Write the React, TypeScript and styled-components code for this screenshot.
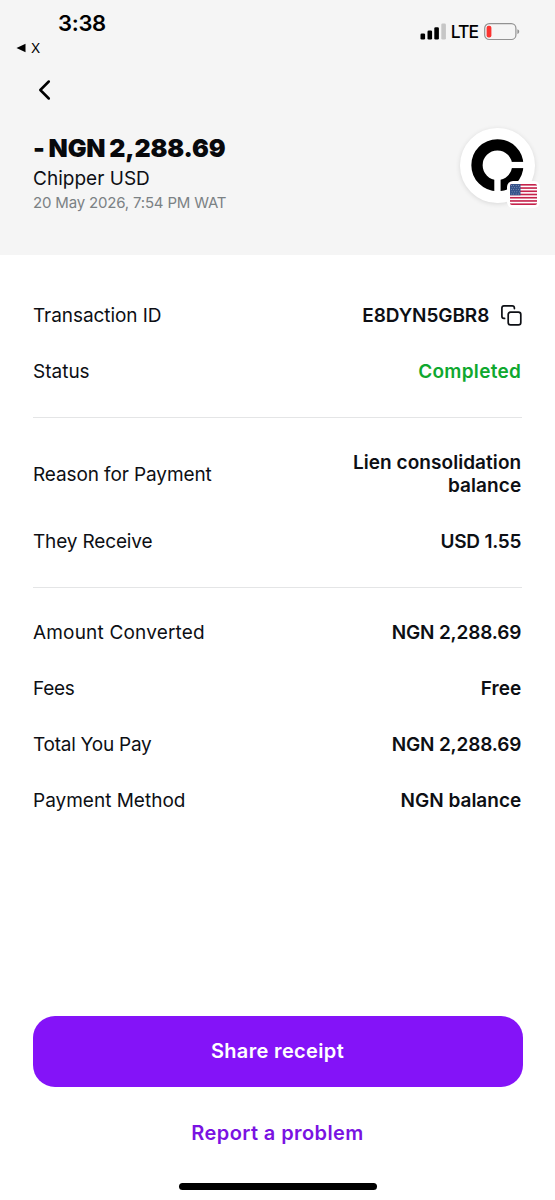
import React from "react";
import styled, { createGlobalStyle } from "styled-components";

const GlobalStyle = createGlobalStyle`
  *, *::before, *::after { box-sizing: border-box; }
  body { margin: 0; background: #fff; }
`;

const Screen = styled.div`
  display: flex;
  flex-direction: column;
  width: 555px;
  height: 1200px;
  background: #fff;
  color: #0d0f14;
  font-family: Inter, "Liberation Sans", sans-serif;
  overflow: hidden;
`;

const Header = styled.header`
  flex: none;
  height: 255px;
  background: #f5f5f5;
`;

const StatusBar = styled.div`
  display: flex;
  justify-content: space-between;
  height: 60px;
  padding: 10px 35px 0 16px;
  color: #000;
`;

const ClockGroup = styled.div`
  display: flex;
  flex-direction: column;
`;

const Clock = styled.span`
  padding-left: 42px;
  font-size: 22px;
  line-height: 26px;
  font-weight: 600;
  letter-spacing: -0.3px;
`;

const BackToApp = styled.span`
  display: flex;
  align-items: center;
  gap: 5px;
  padding-top: 3px;
  font-size: 13.5px;
  line-height: 18px;
`;

const Signals = styled.div`
  display: flex;
  align-items: center;
  height: 43px;
`;

const Network = styled.span`
  margin: 1px 6px 0 4px;
  font-size: 17.5px;
  line-height: 20px;
  font-weight: 450;
  letter-spacing: -1px;
`;

const BackButton = styled.button`
  display: block;
  margin: 18px 0 0 36px;
  padding: 0;
  border: 0;
  background: none;
  height: 24px;
  line-height: 0;
`;

const Summary = styled.div`
  display: flex;
  justify-content: space-between;
  padding: 26px 20.5px 0 33px;
`;

const SummaryText = styled.div`
  display: flex;
  flex-direction: column;
  padding-top: 5px;
`;

const Amount = styled.h1`
  margin: 0;
  font-size: 25px;
  line-height: 30px;
  font-weight: 900;
  letter-spacing: -0.15px;
  word-spacing: -1px;
  color: #08090c;
`;

const Counterparty = styled.span`
  padding-top: 2px;
  font-size: 19px;
  line-height: 28px;
  letter-spacing: 0.02px;
`;

const Timestamp = styled.span`
  font-size: 15px;
  line-height: 20px;
  letter-spacing: -0.18px;
  color: #7b8184;
`;

const Avatar = styled.div`
  position: relative;
  width: 74.5px;
  height: 74.5px;
  border-radius: 50%;
  background: #fff;
  box-shadow: 0 1px 5px rgba(0, 0, 0, 0.12);
`;

const FlagBadge = styled.div`
  position: absolute;
  left: 47px;
  top: 53px;
  padding: 3px;
  border-radius: 6px;
  background: #fff;
  line-height: 0;
`;

const Details = styled.main`
  flex: 1;
  padding: 15px 33px 0;
`;

const Section = styled.section`
  display: flex;
  flex-direction: column;
  gap: 33px;
  padding: 33px 0 34px;
  border-bottom: 1px solid #e4e5e6;
  &:first-child { padding-top: 34px; }
  &:last-child { border-bottom: 0; }
`;

const Row = styled.div`
  display: flex;
  align-items: center;
  justify-content: space-between;
  min-height: 23px;
`;

const Label = styled.span<{ $track?: number }>`
  font-size: 19px;
  line-height: 23px;
  letter-spacing: ${(p) => p.$track ?? 0}px;
`;

const Value = styled.span<{ $positive?: boolean; $track?: number }>`
  max-width: 190px;
  padding-right: 0.8px;
  font-size: 19px;
  line-height: 23px;
  font-weight: 600;
  text-align: right;
  letter-spacing: ${(p) => p.$track ?? 0}px;
  color: ${(p) => (p.$positive ? "#0fa82f" : "inherit")};
`;

const CopyableValue = styled.div`
  display: flex;
  align-items: center;
  gap: 11px;
`;

const Actions = styled.footer`
  display: flex;
  flex-direction: column;
  align-items: center;
  padding: 0 32px 10px;
`;

const PrimaryButton = styled.button`
  width: 490px;
  height: 71px;
  padding: 0 0 1px;
  border: 0;
  border-radius: 22px;
  background: #8413f8;
  color: #fff;
  font: 600 20px/24px Inter, sans-serif;
  letter-spacing: 0.35px;
`;

const LinkButton = styled.button`
  height: 92px;
  padding: 0;
  border: 0;
  background: none;
  color: #7a12e2;
  font: 600 20px/24px Inter, sans-serif;
  letter-spacing: 0.4px;
`;

const HomeIndicator = styled.div`
  width: 198px;
  height: 7px;
  margin-top: 4px;
  border-radius: 4px;
  background: #000;
`;

const SignalBars = () => (
  <svg width="27" height="17" viewBox="0 0 27 17">
    <rect x="0.5" y="10.5" width="4.6" height="6" rx="1.3" />
    <rect x="7.5" y="7.5" width="4.6" height="9" rx="1.3" />
    <rect x="14.3" y="4.3" width="4.6" height="12.2" rx="1.3" />
    <rect x="21.3" y="0.5" width="4.6" height="16" rx="1.3" fill="#c6c6c6" />
  </svg>
);

const Battery = () => (
  <svg width="36" height="18" viewBox="0 0 36 18">
    <rect x="0.7" y="0.7" width="31.2" height="15.8" rx="4.6" fill="none" stroke="#929292" strokeWidth="1.2" />
    <rect x="2.6" y="2.7" width="4.8" height="11.8" rx="2" fill="#fb3330" />
    <path d="M33.4 6.2c1.3.4 1.8 1.3 1.8 2.4s-.5 2-1.8 2.4z" fill="#929292" />
  </svg>
);

const ChipperMark = () => (
  <svg width="74" height="74" viewBox="0 0 74 74">
    <circle cx="37.400" cy="37.200" r="20.4" fill="none" stroke="#000" strokeWidth="11.3" />
    <rect x="49" y="33.9" width="16" height="6.2" fill="#fff" />
    <rect x="34.300" y="48" width="6.3" height="16" fill="#fff" />
  </svg>
);

const stripes = [0, 2, 4, 6, 8, 10, 12];
const starRows = [0, 1, 2, 3, 4];

const UsFlag = () => (
  <svg width="27" height="21" viewBox="0 0 27 21">
    <clipPath id="flag">
      <rect width="27" height="21" rx="1.8" />
    </clipPath>
    <g clipPath="url(#flag)">
      <rect width="27" height="21" fill="#fff" />
      {stripes.map((n) => (
        <rect key={n} y={(n * 21) / 13} width="27" height={21 / 13} fill="#c5224b" />
      ))}
      <rect width="10.5" height="11.3" fill="#35538b" />
      {starRows.map((r) =>
        [0, 1, 2, 3].map((c) => (
          <circle key={`${r}-${c}`} cx={1.3 + c * 2.4 + (r % 2) * 0.8} cy={1.5 + r * 2.1} r="0.4" fill="#d7deeb" />
        ))
      )}
    </g>
  </svg>
);

const CopyIcon = () => (
  <svg width="21" height="21" viewBox="0 0 21 21" fill="none" stroke="#0d0f14" strokeWidth="1.7" strokeLinecap="round" strokeLinejoin="round">
    <rect x="7.2" y="7.2" width="12.6" height="12.6" rx="2.4" />
    <path d="M3.600 13.400H3A2.200 2.200 0 0 1 .9 11.200V3A2.200 2.200 0 0 1 3 .9h8.200A2.200 2.200 0 0 1 13.400 3v.6" />
  </svg>
);

export default function App() {
  return (
    <Screen>
      <GlobalStyle />
      <Header>
        <StatusBar>
          <ClockGroup>
            <Clock>3:38</Clock>
            <BackToApp>
              <svg width="10" height="10" viewBox="0 0 10 10">
                <path d="M.5 5 9.500.800v8.400z" />
              </svg>
              X
            </BackToApp>
          </ClockGroup>
          <Signals>
            <SignalBars />
            <Network>LTE</Network>
            <Battery />
          </Signals>
        </StatusBar>
        <BackButton aria-label="Back">
          <svg width="16" height="24" viewBox="0 0 16 24" fill="none" stroke="#000" strokeWidth="2.5" strokeLinecap="round" strokeLinejoin="round">
            <path d="M12.800 3.500 4.300 12l8.500 8.500" />
          </svg>
        </BackButton>
        <Summary>
          <SummaryText>
            <Amount>- NGN 2,288.69</Amount>
            <Counterparty>Chipper USD</Counterparty>
            <Timestamp>20 May 2026, 7:54 PM WAT</Timestamp>
          </SummaryText>
          <Avatar>
            <ChipperMark />
            <FlagBadge>
              <UsFlag />
            </FlagBadge>
          </Avatar>
        </Summary>
      </Header>
      <Details>
        <Section>
          <Row>
            <Label $track={-0.07}>Transaction ID</Label>
            <CopyableValue>
              <Value $track={-0.1}>E8DYN5GBR8</Value>
              <CopyIcon />
            </CopyableValue>
          </Row>
          <Row>
            <Label>Status</Label>
            <Value $positive $track={0.3}>Completed</Value>
          </Row>
        </Section>
        <Section>
          <Row>
            <Label $track={-0.11}>Reason for Payment</Label>
            <Value $track={0.06}>Lien consolidation balance</Value>
          </Row>
          <Row>
            <Label $track={-0.15}>They Receive</Label>
            <Value $track={-0.25}>USD 1.55</Value>
          </Row>
        </Section>
        <Section>
          <Row>
            <Label $track={0.18}>Amount Converted</Label>
            <Value $track={-0.15}>NGN 2,288.69</Value>
          </Row>
          <Row>
            <Label $track={-0.3}>Fees</Label>
            <Value>Free</Value>
          </Row>
          <Row>
            <Label $track={-0.25}>Total You Pay</Label>
            <Value $track={-0.15}>NGN 2,288.69</Value>
          </Row>
          <Row>
            <Label>Payment Method</Label>
            <Value>NGN balance</Value>
          </Row>
        </Section>
      </Details>
      <Actions>
        <PrimaryButton>Share receipt</PrimaryButton>
        <LinkButton>Report a problem</LinkButton>
        <HomeIndicator />
      </Actions>
    </Screen>
  );
}
